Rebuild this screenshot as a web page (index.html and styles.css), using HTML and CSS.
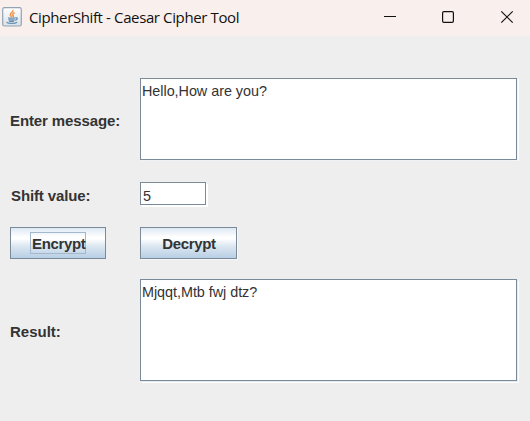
FILE: index.html
```html
<!DOCTYPE html>
<html lang="en">
<head>
<meta charset="utf-8">
<title>CipherShift - Caesar Cipher Tool</title>
<link rel="stylesheet" href="styles.css">
</head>
<body>
<div class="window">
  <header class="titlebar">
    <svg class="app-icon" width="20" height="20" viewBox="0 0 20 20">
      <defs><linearGradient id="tile" x1="0" y1="0" x2="0" y2="1"><stop offset="0" stop-color="#fff"/><stop offset="1" stop-color="#d9e2e9"/></linearGradient></defs>
      <rect x=".7" y=".7" width="18.6" height="18.3" rx="1.8" fill="url(#tile)" stroke="#91a4b2" stroke-width="1.2"/>
      <path d="M10.8 3c1.3 1.9-3.2 3-2.5 5 .2.8 1 1.4 1.5 2M12.7 5.6c-2.4 1.1-2.6 2.1-1.5 3.1.5.5.1 1-.3 1.4" fill="none" stroke="#ef9148" stroke-width="1.5"/>
      <path d="M6 11.1h7.2M6.4 12.9h6.3M7.1 14.4h5M13.4 10.9c2.6-.6 2.3 1.8-.3 2.4M4.6 15.3c1.6 1.6 8.8 1.5 10.6 0" fill="none" stroke="#6990b0" stroke-width="1.3"/>
    </svg>
    <h1 class="title">CipherShift - Caesar Cipher Tool</h1>
    <svg class="controls" width="130" height="14" viewBox="0 0 130 14" fill="none" stroke="#111" stroke-width="1.2">
      <path d="M0 6.5h12" stroke-width="1"/>
      <rect x="58.6" y="1.6" width="10.8" height="10.8" rx="1.3"/>
      <path d="M117.3 1.3l11.4 11.4M128.7 1.3l-11.4 11.4"/>
    </svg>
  </header>
  <main class="form">
    <label class="label" for="message">Enter message:</label>
    <div class="box message" id="message">Hello,How are you?</div>
    <label class="label shift-label" for="shift">Shift value:</label>
    <div class="box shift" id="shift">5</div>
    <button class="button encrypt"><span class="focus">Encrypt</span></button>
    <button class="button decrypt"><span>Decrypt</span></button>
    <label class="label result-label" for="result">Result:</label>
    <div class="box result" id="result">Mjqqt,Mtb fwj dtz?</div>
  </main>
</div>
</body>
</html>
```
FILE: styles.css
```css
* { box-sizing: border-box; }
body { margin: 0; background: #eee; overflow: hidden; }
.window {
  width: 530px;
  height: 421px;
  font-family: "Liberation Sans", Arial, sans-serif;
  color: #333;
}
.titlebar {
  display: flex;
  align-items: center;
  height: 36px;
  padding: 0 16px 2px 2px;
  background: #f9f0ee;
}
.app-icon { flex: none; margin-top: -1px; }
.title {
  margin: 0 0 0 7px;
  font: 400 15px/20px "Open Sans", "Noto Sans", sans-serif;
  letter-spacing: -0.38px;
  color: #111;
  white-space: nowrap;
}
.controls { flex: none; margin-left: auto; }
.form {
  display: grid;
  grid-template-columns: 130px 377px;
  grid-template-rows: 84px 25px 32px 102px;
  row-gap: 20px;
  align-items: start;
  padding: 42px 0 0 10px;
}
.label {
  align-self: center;
  padding-top: 2px;
  font-size: 15px;
  font-weight: 700;
  line-height: 18px;
  letter-spacing: -0.12px;
  white-space: nowrap;
}
.shift-label { padding-left: 1px; }
.result-label { padding-top: 4px; letter-spacing: 0; }
.box {
  padding: 3px 1px;
  border: 1px solid #7a8a99;
  background: #fff;
  box-shadow: 1px 1px #f0f3f6, 2px 1px #fff;
  font-size: 14.4px;
  line-height: 18px;
  letter-spacing: -0.04px;
  white-space: nowrap;
}
.message { height: 82px; }
.result { height: 102px; box-shadow: 1px 1px #e3eaf1, 2px 2px #fff; }
.shift { width: 66px; height: 23px; padding: 4px 2px; box-shadow: 1px 1px #fff, 2px 2px #fff; }
.button {
  display: flex;
  align-items: center;
  justify-content: center;
  height: 32px;
  padding: 2px 0 0 1px;
  border: 1px solid #7a8a99;
  border-radius: 0;
  background: linear-gradient(#dde8f3 0, #fff 30%, #fff 36%, #dce7f1 60%, #b8cfe5 100%);
  color: #333;
  font: 700 15px/18px "Liberation Sans", Arial, sans-serif;
  letter-spacing: -0.35px;
}
.encrypt { width: 96px; padding-left: 0; }
.decrypt { width: 97px; box-shadow: 1px 1px #f7f8f9; }
.focus {
  width: 56px;
  height: 22px;
  margin-top: -2px;
  padding: 2px 0 0 1px;
  border: 1px solid #a3b8cc;
  text-align: left;
}
```
